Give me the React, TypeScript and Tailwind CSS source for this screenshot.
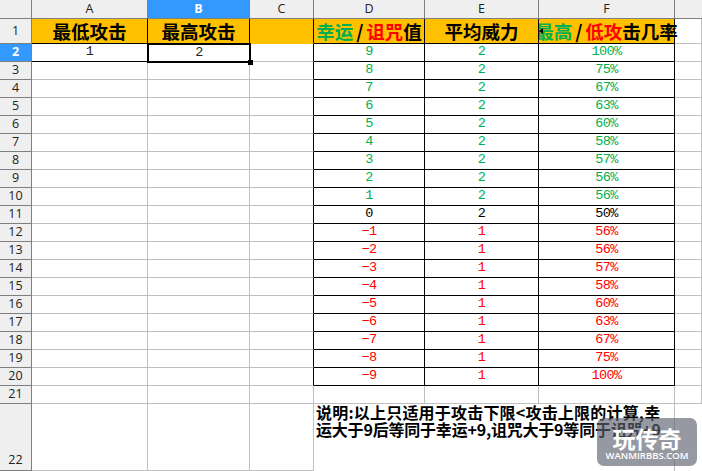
const rows: [number, string, number, string][] = [
  [2, '9', 2, '100%'],
  [3, '8', 2, '75%'],
  [4, '7', 2, '67%'],
  [5, '6', 2, '63%'],
  [6, '5', 2, '60%'],
  [7, '4', 2, '58%'],
  [8, '3', 2, '57%'],
  [9, '2', 2, '56%'],
  [10, '1', 2, '56%'],
  [11, '0', 2, '50%'],
  [12, '−1', 1, '56%'],
  [13, '−2', 1, '56%'],
  [14, '−3', 1, '57%'],
  [15, '−4', 1, '58%'],
  [16, '−5', 1, '60%'],
  [17, '−6', 1, '63%'],
  [18, '−7', 1, '67%'],
  [19, '−8', 1, '75%'],
  [20, '−9', 1, '100%'],
];

const num = "font-['Liberation_Mono','Noto_Sans_CJK_SC',monospace] text-[13.5px] tracking-[-0.6px] font-normal";
const head = "font-['Noto_Sans_CJK_SC',sans-serif] font-bold text-[18.5px] leading-none text-black whitespace-nowrap";
const hdrText = "font-['Open_Sans',sans-serif] text-[12.5px] text-[#222]";

function ColHead({ label, active }: { label: string; active?: boolean }) {
  return (
    <div
      className={`flex items-center justify-center border-r border-b border-[#7f7f7f] ${hdrText} ${
        active ? 'bg-[#3399ff] font-bold text-white' : 'bg-[#efefef]'
      }`}
    >
      {label}
    </div>
  );
}

function RowHead({ label, active, end }: { label: number; active?: boolean; end?: boolean }) {
  return (
    <div
      className={`flex justify-center border-r border-b border-[#7f7f7f] ${hdrText} ${
        end ? 'items-end' : 'items-center'
      } ${active ? 'bg-[#3399ff] font-bold text-white' : 'bg-[#efefef]'}`}
    >
      {label}
    </div>
  );
}

function Blank() {
  return <div className="border-r border-b border-[#c0c0c0] bg-white" />;
}

function Data({ value, tone }: { value: string | number; tone: string }) {
  return (
    <div className={`flex items-center justify-center border-r border-b border-black bg-white ${num} ${tone}`}>
      {value}
    </div>
  );
}

export default function App() {
  return (
    <div className="relative h-[471px] w-[702px] overflow-hidden bg-white">
      <div className="grid grid-cols-[32px_116px_102px_64px_111px_114px_136px_27px] grid-rows-[19px_25px_repeat(20,18px)_67px]">
        {/* column headers */}
        <div className="border-r border-b border-[#7f7f7f] bg-[#efefef]" />
        <ColHead label="A" />
        <ColHead label="B" active />
        <ColHead label="C" />
        <ColHead label="D" />
        <ColHead label="E" />
        <ColHead label="F" />
        <div className="border-b border-[#7f7f7f] bg-[#efefef]" />

        {/* row 1 */}
        <RowHead label={1} />
        <div className={`flex items-center justify-center border-r border-b border-black bg-[#ffc000] ${head}`}>最低攻击</div>
        <div className={`flex items-center justify-center border-r border-b border-black bg-[#ffc000] ${head}`}>最高攻击</div>
        <div className="border-r border-b border-r-black border-b-[#ffc000] bg-[#ffc000]" />
        <div className={`flex items-center justify-center border-r border-b border-black bg-[#ffc000] ${head}`}>
          <span className="text-[#00b050]">幸运</span>
          <span className="px-[3px]">/</span>
          <span className="text-[#ff0000]">诅咒</span>值
        </div>
        <div className={`flex items-center justify-center border-r border-b border-black bg-[#ffc000] ${head}`}>平均威力</div>
        <div className={`relative flex items-center justify-center border-r border-b border-black bg-[#ffc000] [clip-path:inset(0_-10px_0_0)] ${head}`}>
          <span className="text-[#00b050]">最高</span>
          <span className="px-[3px]">/</span>
          <span className="text-[#ff0000]">低攻</span>击几率
          <span className="absolute top-[9px] left-0 h-0 w-0 border-y-[3px] border-r-[4px] border-y-transparent border-r-black" />
        </div>
        <Blank />

        {/* row 2 onward */}
        {rows.map(([n, luck, power, rate]) => {
          const tone = n < 11 ? 'text-[#00b050]' : n === 11 ? 'text-black' : 'text-[#ff0000]';
          const first = n === 2;
          return (
            <div key={n} className="contents">
              <RowHead label={n} active={first} />
              {first ? (
                <>
                  <div className={`flex items-center justify-center border-r border-b border-black bg-white text-[#222] ${num}`}>1</div>
                  <div className={`relative flex items-center justify-center bg-white text-[#222] ${num}`}>
                    2
                    <span className="absolute -top-px -right-px -bottom-px -left-px border-2 border-black" />
                    <span className="absolute -right-[3px] -bottom-[3px] h-[5px] w-[5px] bg-black" />
                  </div>
                </>
              ) : (
                <>
                  <Blank />
                  <Blank />
                </>
              )}
              <div className="border-r border-b border-r-black border-b-[#c0c0c0] bg-white" />
              <Data value={luck} tone={tone} />
              <Data value={power} tone={tone} />
              <Data value={rate} tone={tone} />
              <Blank />
            </div>
          );
        })}

        {/* row 21 */}
        <RowHead label={21} />
        <Blank />
        <Blank />
        <Blank />
        <Blank />
        <Blank />
        <Blank />
        <Blank />

        {/* row 22 */}
        <RowHead label={22} end />
        <Blank />
        <Blank />
        <Blank />
        <div className="col-span-3 border-r border-[#c0c0c0] bg-white pl-[2px]">
          <p className="w-[350px] font-['Noto_Sans_CJK_SC',sans-serif] text-[16px] leading-[17px] font-bold whitespace-nowrap text-black">
            <span className="tracking-[0.2px]">说明:以上只适用于攻击下限&lt;攻击上限的计算,幸</span>
            <br />
            <span className="tracking-[-0.2px]">运大于9后等同于幸运+9,诅咒大于9等同于诅咒+9</span>
          </p>
        </div>
        <div className="bg-white" />
      </div>

      {/* site watermark */}
      <div className="absolute top-[418px] left-[597px] flex h-[48px] w-[100px] flex-col items-center justify-end rounded-[7px] bg-[#5f6370]/65 pb-[4px]">
        <span className="font-['Noto_Sans_CJK_SC',sans-serif] text-[23px] leading-[24px] font-bold text-white">玩传奇</span>
        <span className="font-['Open_Sans',sans-serif] text-[9.5px] leading-[12px] font-semibold text-white">WANMIRBBS.COM</span>
      </div>
    </div>
  );
}
